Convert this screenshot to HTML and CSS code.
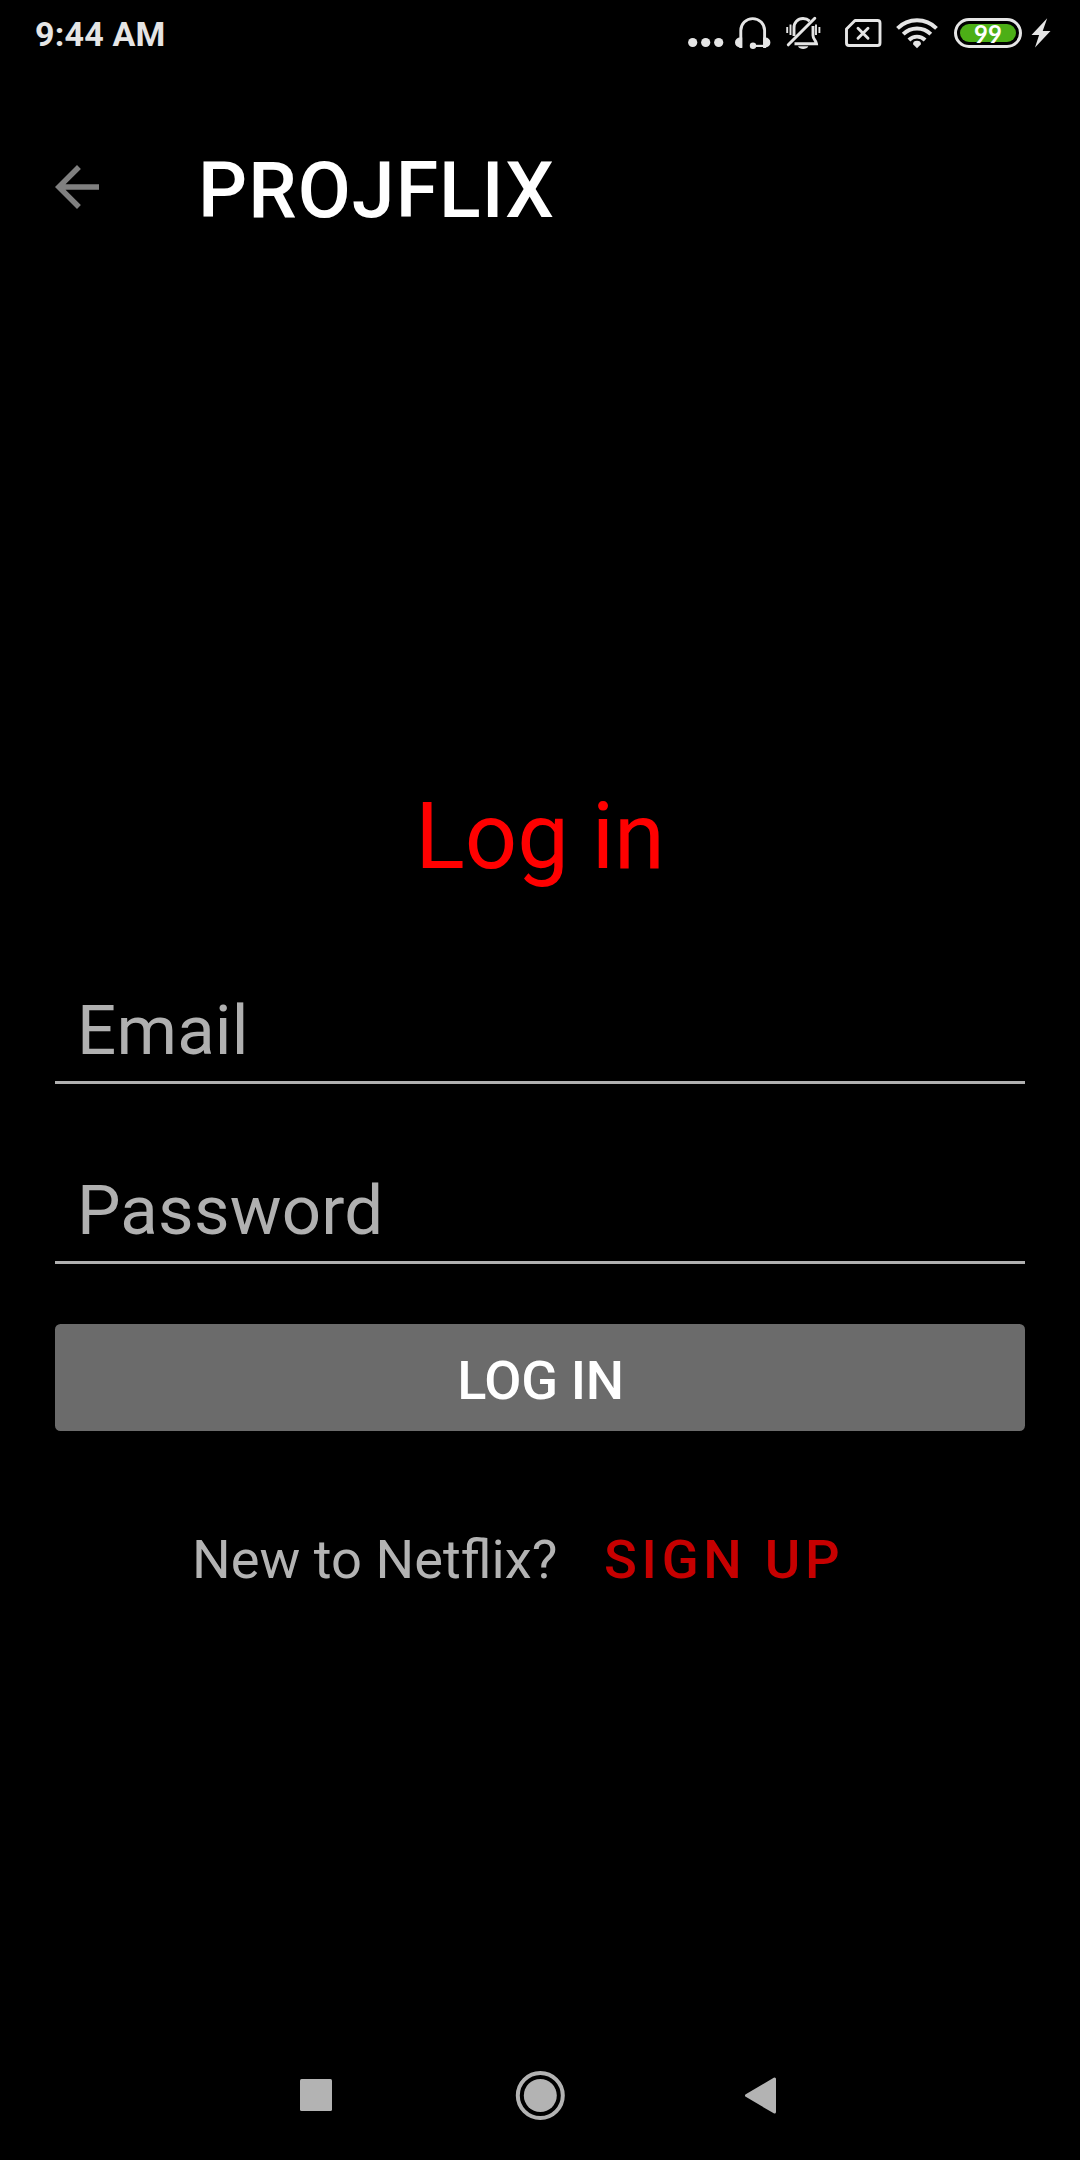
FILE: index.html
```html
<!DOCTYPE html>
<html lang="en">
<head>
<meta charset="utf-8">
<title>PROJFLIX</title>
<link rel="stylesheet" href="styles.css">
</head>
<body>
<div class="screen">
  <div class="status-bar">
    <span class="clock">9:44 AM</span>
    <div class="status-icons">
      <svg class="dots" width="36" height="69" viewBox="0 0 36 69"><g fill="#e5e5e5"><circle cx="4.7" cy="42.5" r="4.6"/><circle cx="17.7" cy="42.5" r="4.6"/><circle cx="30.7" cy="42.5" r="4.6"/></g></svg>
      <svg class="headset" width="36" height="69" viewBox="0 0 36 69"><path d="M5.8 48V30.5a11.9 11.9 0 0 1 23.8 0V48" fill="none" stroke="#e5e5e5" stroke-width="2.9"/><path d="M7.2 37.5H5a5 5 0 0 0-5 5 5 5 0 0 0 5 5h2.2zM28.2 37.5h2.2a5 5 0 0 1 5 5 5 5 0 0 1-5 5h-2.2z" fill="#e5e5e5"/><path d="M18 45.9h12" stroke="#e5e5e5" stroke-width="2.2"/><circle cx="18" cy="45.8" r="3.2" fill="#e5e5e5"/></svg>
      <svg class="bell" width="36" height="69" viewBox="0 0 36 69"><g fill="none" stroke="#e5e5e5"><path d="M1.2 27v6M4.500 24.500v10.500M30 24.500v10.500M33.400 27v6" stroke-width="1.900"/><path d="M8 36V28a9 9 0 0 1 9-9.500c3 0 5 1 6.700 2.600M27 26v9.500c0 4 3 4.500 3.500 8.300H8.500" stroke-width="2.900"/><path d="M2.300 44.800 28.800 18.300" stroke-width="3" stroke-linecap="round"/></g><path d="M12 46.200h10.300c-1.500 3.600-8.800 3.600-10.300 0z" fill="#e5e5e5"/></svg>
      <svg class="sim" width="37" height="69" viewBox="0 0 37 69"><path d="M10 20.500h22.500a2.500 2.500 0 0 1 2.500 2.500v20a2.500 2.500 0 0 1-2.500 2.500h-28.500a2.500 2.500 0 0 1-2.500-2.500v-14z" fill="none" stroke="#e5e5e5" stroke-width="2.900" stroke-linejoin="round"/><path d="m13 28.300 10 10m0-10-10 10" stroke="#e5e5e5" stroke-width="2.900" stroke-linecap="round"/></svg>
      <svg class="wifi" width="42" height="69" viewBox="0 0 42 69"><g fill="none" stroke="#e5e5e5" stroke-width="3.900"><path d="M1.500 28.300a27.500 27.500 0 0 1 39 0"/><path d="M7.200 34.200a19.500 19.500 0 0 1 27.600 0"/><path d="M12.900 40a11.500 11.500 0 0 1 16.200 0"/></g><path d="M21 48.200l-4-4a4 3.400 0 0 1 8 0z" fill="#e5e5e5"/></svg>
      <div class="battery"><div class="battery-level">99</div></div>
      <svg class="bolt" width="20" height="69" viewBox="0 0 20 69"><path d="M16.200 18.200.5 35h7.600L4 47.500 19.500 31h-7.800z" fill="#e5e5e5"/></svg>
    </div>
  </div>

  <header class="app-bar">
    <svg class="back" width="66" height="66" viewBox="0 0 24 24"><path d="M20 11H7.830l5.590-5.590L12 4l-8 8 8 8 1.410-1.410L7.830 13H20v-2z" fill="#808080"/></svg>
    <div class="brand">PROJFLIX</div>
  </header>

  <main class="content">
    <h1 class="heading">Log in</h1>
    <input class="field" type="email" placeholder="Email">
    <input class="field" type="password" placeholder="Password">
    <button class="submit">LOG IN</button>
    <div class="register">
      <span class="question">New to Netflix?</span>
      <a class="sign-up">SIGN UP</a>
    </div>
  </main>

  <nav class="nav-bar">
    <svg width="32" height="50" viewBox="0 0 32 50"><rect y="9" width="32" height="32" rx="1.500" fill="#b3b3b3"/></svg>
    <svg width="50" height="50" viewBox="0 0 50 50"><circle cx="25.300" cy="25.500" r="22.500" fill="none" stroke="#b3b3b3" stroke-width="4"/><circle cx="25.300" cy="25.500" r="16.500" fill="#b3b3b3"/></svg>
    <svg width="32" height="50" viewBox="0 0 32 50"><path d="M1.500 25.500 29.500 9v33z" fill="#b3b3b3" stroke="#b3b3b3" stroke-width="3" stroke-linejoin="round"/></svg>
  </nav>
</div>
</body>
</html>
```
FILE: styles.css
```css
* {
  box-sizing: border-box;
}

body {
  margin: 0;
  background: #000;
  font-family: Roboto, "Noto Sans", sans-serif;
}

svg {
  display: block;
  flex: none;
}

.screen {
  display: flex;
  flex-direction: column;
  width: 1080px;
  height: 2160px;
  background: #000;
}

.status-bar {
  display: flex;
  justify-content: space-between;
  height: 69px;
  padding: 0 29px 0 35px;
}

.clock {
  color: #e5e5e5;
  font-size: 34px;
  font-weight: 700;
  letter-spacing: 0.2px;
  line-height: 69px;
  white-space: nowrap;
}

.status-icons {
  display: flex;
}

.headset { margin-left: 11px; }
.bell { margin-left: 15px; }
.sim { margin-left: 23px; }
.wifi { margin-left: 14px; }

.battery {
  width: 68px;
  height: 30px;
  margin: 18px 9px 0 16px;
  padding: 3px;
  border: 3px solid #e5e5e5;
  border-radius: 15px;
}

.battery-level {
  height: 18px;
  border-radius: 9px;
  background: #4caf16;
  color: #fff;
  font-family: Lato, sans-serif;
  font-size: 24px;
  font-weight: 700;
  line-height: 19px;
  text-align: center;
}

.app-bar {
  display: flex;
  align-items: center;
  height: 236px;
  padding-left: 44px;
}

.brand {
  margin-left: 88px;
  padding-top: 7px;
  color: #fff;
  font-size: 77px;
  font-weight: 500;
  letter-spacing: 1.05px;
  line-height: 90px;
}

.content {
  display: flex;
  flex-direction: column;
  padding: 0 55px;
}

.heading {
  margin: 477px 0 0;
  color: #f00;
  font-size: 92px;
  font-weight: 400;
  line-height: 110px;
  text-align: center;
}

.field {
  width: 100%;
  height: 108px;
  margin: 84px 0 0;
  padding: 3px 22px 0;
  border: 0;
  border-bottom: 3px solid #b0b0b0;
  border-radius: 0;
  outline: 0;
  background: transparent;
  color: #b0b0b0;
  font: 400 69px Roboto, sans-serif;
  letter-spacing: 0.2px;
}

.field + .field {
  margin-top: 72px;
}

.field::placeholder {
  color: #b0b0b0;
  opacity: 1;
}

.submit {
  height: 107px;
  margin: 60px 0 0;
  padding: 6px 0 0 1px;
  border: 0;
  border-radius: 5.5px;
  background: #6b6b6b;
  color: #fff;
  font: 500 54px Roboto, sans-serif;
  letter-spacing: -0.3px;
}

.register {
  display: flex;
  margin: 96px 0 0 137px;
  font-size: 54.3px;
  line-height: 66px;
  white-space: nowrap;
}

.question {
  width: 412px;
  color: #b3b3b3;
}

.sign-up {
  color: #c60000;
  font-weight: 500;
  letter-spacing: 4.7px;
}

.nav-bar {
  display: flex;
  justify-content: space-between;
  margin-top: auto;
  padding: 0 303px 40px 300px;
}

.nav-bar svg:nth-child(2) {
  margin-left: 2px;
}
```
